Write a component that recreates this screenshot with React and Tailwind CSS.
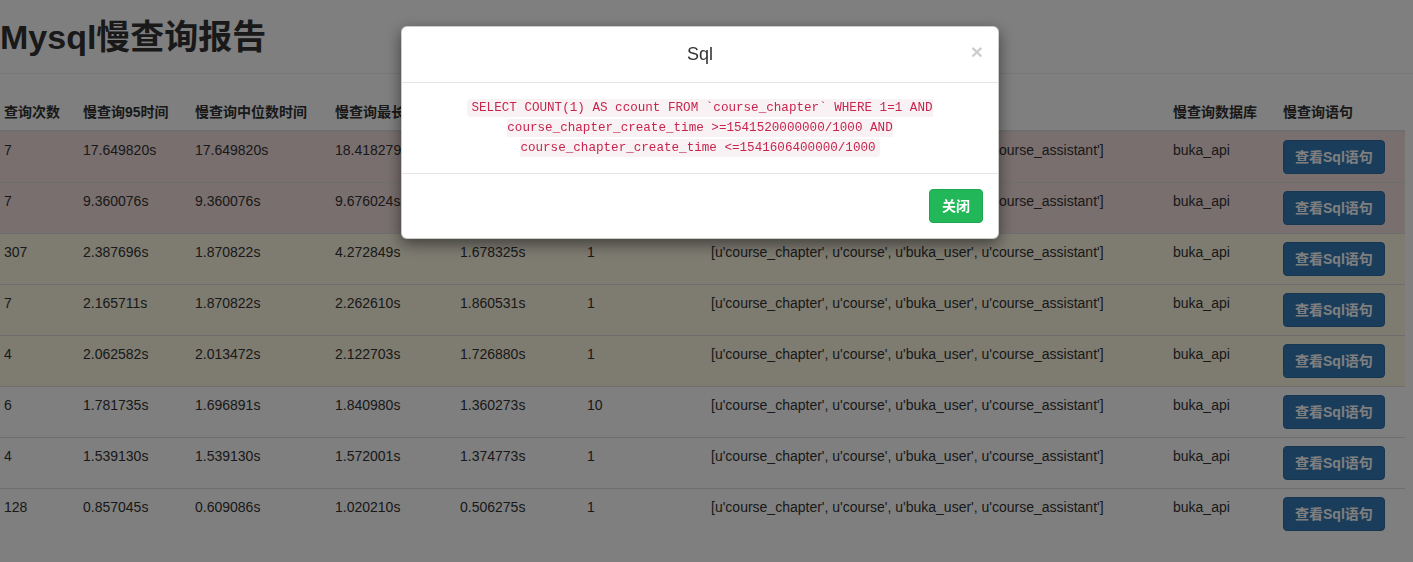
import React from 'react';

const tables = "[u'course_chapter', u'course', u'buka_user', u'course_assistant']";

const rows = [
  { tone: 'danger', n: '7', p95: '17.649820s', mid: '17.649820s', max: '18.418279s', min: '16.881361s', users: '1' },
  { tone: 'danger', n: '7', p95: '9.360076s', mid: '9.360076s', max: '9.676024s', min: '9.012338s', users: '1' },
  { tone: 'warning', n: '307', p95: '2.387696s', mid: '1.870822s', max: '4.272849s', min: '1.678325s', users: '1' },
  { tone: 'warning', n: '7', p95: '2.165711s', mid: '1.870822s', max: '2.262610s', min: '1.860531s', users: '1' },
  { tone: 'warning', n: '4', p95: '2.062582s', mid: '2.013472s', max: '2.122703s', min: '1.726880s', users: '1' },
  { tone: '', n: '6', p95: '1.781735s', mid: '1.696891s', max: '1.840980s', min: '1.360273s', users: '10' },
  { tone: '', n: '4', p95: '1.539130s', mid: '1.539130s', max: '1.572001s', min: '1.374773s', users: '1' },
  { tone: '', n: '128', p95: '0.857045s', mid: '0.609086s', max: '1.020210s', min: '0.506275s', users: '1' },
];

const heads = [
  ['查询次数', 'w-[79px]'],
  ['慢查询95时间', 'w-[112px]'],
  ['慢查询中位数时间', 'w-[140px]'],
  ['慢查询最长时间', 'w-[125px]'],
  ['慢查询最短时间', 'w-[127px]'],
  ['慢查询用户数', 'w-[124px]'],
  ['慢查询涉及表', 'w-[462px]'],
  ['慢查询数据库', 'w-[110px]'],
  ['慢查询语句', 'w-[130px]'],
];

const sql = 'SELECT COUNT(1) AS ccount FROM `course_chapter` WHERE 1=1 AND course_chapter_create_time >=1541520000000/1000 AND course_chapter_create_time <=1541606400000/1000';

export default function App() {
  return (
    <div className="relative min-h-[562px] bg-white text-[14px] leading-[20px] text-[#333] overflow-hidden font-['Liberation_Sans','Noto_Sans_CJK_SC',sans-serif]">
      <div className="border-b border-[#eee] pt-[18px] pb-[16px]">
        <h1 className="text-[34px] leading-[39px] font-semibold">Mysql慢查询报告</h1>
      </div>

      <table className="table-fixed border-collapse w-[1409px] -ml-1 mt-[20px]">
        <thead>
          <tr>
            {heads.map(([h, w]) => (
              <th key={h} className={`${w} text-left font-bold px-2 py-2 border-b-2 border-[#ddd] align-bottom whitespace-nowrap overflow-hidden`}>{h}</th>
            ))}
          </tr>
        </thead>
        <tbody>
          {rows.map((r, i) => (
            <tr key={i} className={r.tone === 'danger' ? 'bg-[#f2dede]' : r.tone === 'warning' ? 'bg-[#fcf8e3]' : ''}>
              {[r.n, r.p95, r.mid, r.max, r.min, r.users, tables, 'buka_api'].map((v, j) => (
                <td key={j} className="px-2 py-2 border-t border-[#ddd] align-top whitespace-nowrap">{v}</td>
              ))}
              <td className="px-2 py-2 border-t border-[#ddd] align-top">
                <button className="bg-[#337ab7] border border-[#2e6da4] text-white font-bold rounded-[4px] px-[11px] py-[6px] leading-[20px] whitespace-nowrap">查看Sql语句</button>
              </td>
            </tr>
          ))}
        </tbody>
      </table>

      {/* modal backdrop + dialog */}
      <div className="fixed inset-0 bg-black/50">
        <div className="ml-[401px] mt-[26px] w-[598px] bg-white rounded-[6px] border border-black/20 shadow-[0_5px_15px_rgba(0,0,0,0.5)]">
          <div className="relative px-[15px] pt-[14px] pb-[15px] border-b border-[#e5e5e5] text-center">
            <span className="absolute right-[15px] top-[14px] text-[21px] leading-[21px] font-bold text-black/20">×</span>
            <h4 className="text-[18px] leading-[26px] font-medium text-[#333]">Sql</h4>
          </div>
          <div className="p-[15px] text-center text-[12.6px] leading-[20px] font-['Liberation_Mono','DejaVu_Sans_Mono',monospace]">
            <code className="text-[#c7254e] bg-[#f9f2f4] rounded-[4px] px-1 py-[2px] leading-[20px]">{sql}</code>
          </div>
          <div className="px-[15px] py-[15px] border-t border-[#e5e5e5] flex justify-end">
            <button className="bg-[#22b85a] border border-[#1ea751] text-white font-bold rounded-[4px] px-3 py-[6px] leading-[20px]">关闭</button>
          </div>
        </div>
      </div>
    </div>
  );
}
